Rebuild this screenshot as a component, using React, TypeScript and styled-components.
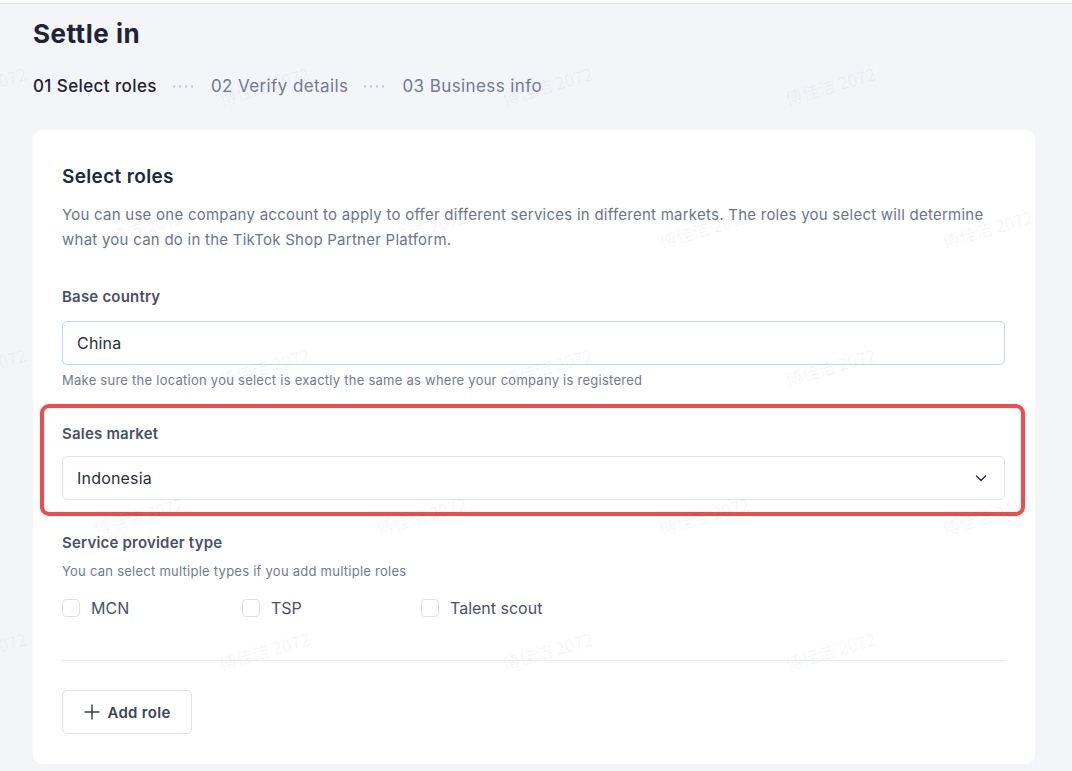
import React from "react";
import styled, { createGlobalStyle } from "styled-components";

const GlobalStyle = createGlobalStyle`
  html, body {
    margin: 0;
    padding: 0;
    background: #f3f5f9;
    font-family: Inter, "Noto Sans", "Noto Sans CJK SC", sans-serif;
    color: #1f2333;
  }
  * { box-sizing: border-box; }
`;

const Page = styled.div`
  position: relative;
  width: 1072px;
  height: 771px;
  overflow: hidden;
  background: #f3f5f9;
`;

const TopBar = styled.div`
  height: 4px;
  background: #ffffff;
  border-bottom: 1px solid #e6e8ee;
`;

const Main = styled.div`
  padding: 13px 37px 0 33px;
`;

const Title = styled.h1`
  margin: 0;
  font-size: 26px;
  line-height: 34px;
  font-weight: 700;
  letter-spacing: 0.5px;
  color: #1f2333;
`;

const Steps = styled.div`
  display: flex;
  align-items: center;
  gap: 14px;
  margin-top: 20px;
  height: 30px;
`;

const Step = styled.span<{ $active?: boolean }>`
  font-size: 17px;
  letter-spacing: 0.4px;
  color: ${(p) => (p.$active ? "#1f2333" : "#737a95")};
  font-weight: ${(p) => (p.$active ? 500 : 400)};
`;

const Dots = styled.span`
  width: 26px;
  height: 3px;
  background-image: radial-gradient(circle, #c6cad6 1px, transparent 1.3px);
  background-size: 6px 3px;
`;

const Card = styled.section`
  margin-top: 29px;
  background: #ffffff;
  border-radius: 9px;
  padding: 34px 30px 29px 29px;
  height: 634px;
`;

const CardTitle = styled.h2`
  margin: 0;
  font-size: 19px;
  line-height: 26px;
  font-weight: 600;
  letter-spacing: 0.35px;
  color: #23273a;
`;

const Desc = styled.p`
  margin: 12px 0 0;
  font-size: 15px;
  line-height: 25px;
  letter-spacing: 0.25px;
  color: #6d7490;
`;

const Field = styled.div<{ $top: number }>`
  margin-top: ${(p) => p.$top}px;
`;

const Label = styled.div`
  font-size: 15px;
  line-height: 20px;
  font-weight: 600;
  letter-spacing: 0.2px;
  color: #4b5068;
`;

const Input = styled.div<{ $focus?: boolean; $gap: number }>`
  margin-top: ${(p) => p.$gap}px;
  height: 44px;
  border: 1px solid ${(p) => (p.$focus ? "#c3d6f0" : "#e1e4ec")};
  border-radius: 5px;
  display: flex;
  align-items: center;
  justify-content: space-between;
  padding: 0 16px 0 14px;
  font-size: 16px;
  letter-spacing: 0.2px;
  color: #2b2f40;
`;

const Help = styled.div<{ $top: number }>`
  margin-top: ${(p) => p.$top}px;
  font-size: 13px;
  line-height: 18px;
  letter-spacing: 0.25px;
  color: #737a95;
`;

const Checks = styled.div`
  display: grid;
  grid-template-columns: 180px 179px auto;
  margin-top: 18px;
`;

const CheckItem = styled.label`
  display: flex;
  align-items: center;
  gap: 11px;
  font-size: 16px;
  color: #4b5068;
`;

const Box = styled.span`
  width: 18px;
  height: 18px;
  border: 1px solid #dde1ea;
  border-radius: 4px;
  background: #fff;
`;

const Divider = styled.hr`
  margin: 42px 0 0;
  border: none;
  border-top: 1px solid #e9ebf0;
`;

const AddButton = styled.button`
  margin-top: 29px;
  height: 44px;
  width: 130px;
  border: 1px solid #e1e4ec;
  border-radius: 5px;
  background: #fff;
  display: flex;
  align-items: center;
  justify-content: center;
  gap: 6px;
  font-family: inherit;
  font-size: 15px;
  font-weight: 600;
  letter-spacing: 0.3px;
  color: #3d4259;
`;

const Highlight = styled.div`
  position: absolute;
  left: 40px;
  top: 404px;
  width: 985px;
  height: 112px;
  border: 4px solid #f24a4a;
  border-radius: 9px;
  pointer-events: none;
`;

const Watermark = styled.span`
  position: absolute;
  font-size: 17px;
  color: rgba(60, 70, 100, 0.06);
  transform: rotate(-16deg);
  white-space: nowrap;
  pointer-events: none;
  font-family: "Noto Sans CJK SC", sans-serif;
`;

const Chevron = () => (
  <svg width="14" height="14" viewBox="0 0 14 14" fill="none">
    <path d="M2.5 5l4.5 4.5L11.5 5" stroke="#2b2f40" strokeWidth="1.4" strokeLinecap="round" strokeLinejoin="round" />
  </svg>
);

const Plus = () => (
  <svg width="18" height="18" viewBox="0 0 18 18" fill="none">
    <path d="M9 1.5v15M1.5 9h15" stroke="#3d4259" strokeWidth="1.5" />
  </svg>
);

const rows = [85, 228, 366, 515, 650];
const marks: { x: number; y: number }[] = [];
rows.forEach((y, i) => {
  const start = i % 2 === 0 ? -65 : 92;
  for (let k = 0; k < 4; k++) marks.push({ x: start + k * 283, y: y - 12 });
});

export default function App() {
  return (
    <Page>
      <GlobalStyle />
      <TopBar />
      <Main>
        <Title>Settle in</Title>
        <Steps>
          <Step $active>01 Select roles</Step>
          <Dots />
          <Step>02 Verify details</Step>
          <Dots />
          <Step>03 Business info</Step>
        </Steps>
        <Card>
          <CardTitle>Select roles</CardTitle>
          <Desc>
            You can use one company account to apply to offer different services in different markets. The roles you select will determine
            what you can do in the TikTok Shop Partner Platform.
          </Desc>
          <Field $top={35}>
            <Label>Base country</Label>
            <Input $focus $gap={14}>China</Input>
            <Help $top={6}>Make sure the location you select is exactly the same as where your company is registered</Help>
          </Field>
          <Field $top={35}>
            <Label>Sales market</Label>
            <Input $gap={12}>
              Indonesia
              <Chevron />
            </Input>
          </Field>
          <Field $top={33}>
            <Label>Service provider type</Label>
            <Help $top={9}>You can select multiple types if you add multiple roles</Help>
            <Checks>
              <CheckItem><Box />MCN</CheckItem>
              <CheckItem><Box />TSP</CheckItem>
              <CheckItem><Box />Talent scout</CheckItem>
            </Checks>
          </Field>
          <Divider />
          <AddButton>
            <Plus />
            Add role
          </AddButton>
        </Card>
      </Main>
      <Highlight />
      {marks.map((m, i) => (
        <Watermark key={i} style={{ left: m.x, top: m.y }}>傅佳洁 2072</Watermark>
      ))}
    </Page>
  );
}
